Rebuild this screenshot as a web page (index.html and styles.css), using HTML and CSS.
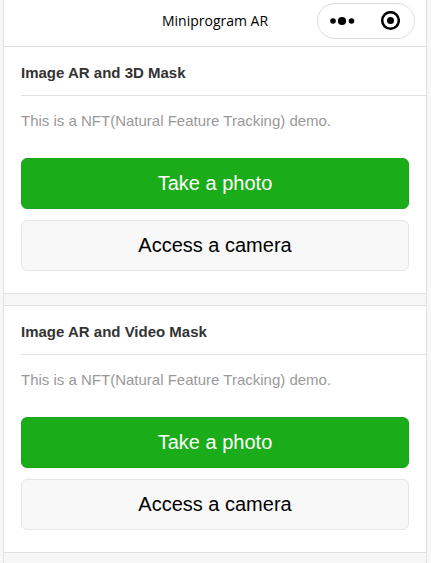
FILE: index.html
```html
<!DOCTYPE html>
<html lang="en">
<head>
<meta charset="utf-8">
<meta name="viewport" content="width=device-width, initial-scale=1">
<title>Miniprogram AR</title>
<link rel="stylesheet" href="styles.css">
</head>
<body>
<div class="phone">
  <header class="navbar">
    <h1 class="navbar-title">Miniprogram AR</h1>
    <div class="capsule">
      <button class="capsule-button" type="button" aria-label="More">
        <svg width="26" height="20" viewBox="0 0 26 20" aria-hidden="true">
          <circle cx="4" cy="10" r="2.8"/><circle cx="13" cy="10" r="4.1"/><circle cx="22.5" cy="10" r="2.8"/>
        </svg>
      </button>
      <button class="capsule-button" type="button" aria-label="Close">
        <svg width="20" height="20" viewBox="0 0 20 20" aria-hidden="true">
          <circle cx="10.5" cy="9.5" r="8.3" fill="none" stroke="#000" stroke-width="2.5"/><circle cx="10.5" cy="9.5" r="3.5"/>
        </svg>
      </button>
    </div>
  </header>
  <main class="cards">
    <section class="card">
      <h2 class="card-title">Image AR and 3D Mask</h2>
      <div class="card-body">
        <p class="card-text">This is a NFT(Natural Feature Tracking) demo.</p>
        <button class="button button-primary" type="button">Take a photo</button>
        <button class="button" type="button">Access a camera</button>
      </div>
    </section>
    <section class="card">
      <h2 class="card-title">Image AR and Video Mask</h2>
      <div class="card-body">
        <p class="card-text">This is a NFT(Natural Feature Tracking) demo.</p>
        <button class="button button-primary" type="button">Take a photo</button>
        <button class="button" type="button">Access a camera</button>
      </div>
    </section>
  </main>
</div>
</body>
</html>
```
FILE: styles.css
```css
* {
  box-sizing: border-box;
}

body {
  margin: 0;
  background: #f7f7f7;
  font-family: "Liberation Sans", Arial, sans-serif;
}

.phone {
  min-height: 100vh;
  margin: 0 4px 0 3px;
  border: solid #e2e2e2;
  border-width: 0 1px;
}

.navbar {
  display: grid;
  grid-template-columns: 1fr auto 1fr;
  align-items: center;
  height: 47px;
  padding: 0 11px 4px;
  background: #fff;
  border-bottom: 1px solid #e0e0e0;
}

.navbar-title {
  grid-column: 2;
  margin: 0;
  font: 400 14px/20px "Open Sans", "Noto Sans", sans-serif;
  color: #000;
}

.capsule {
  display: flex;
  justify-self: end;
  width: 98px;
  height: 36px;
  border: 1px solid #dcdcdc;
  border-radius: 18px;
}

.capsule-button {
  display: flex;
  flex: 1;
  align-items: center;
  justify-content: center;
  padding: 0;
  border: 0;
  background: none;
}

.cards {
  display: grid;
  gap: 11px;
}

.card {
  padding-left: 17px;
  background: #fff;
  border-bottom: 1px solid #e0e0e0;
}

.card + .card {
  border-top: 1px solid #e0e0e0;
}

.card-title {
  margin: 0;
  padding: 18px 0 14px;
  border-bottom: 1px solid #e0e0e0;
  font-size: 15px;
  line-height: 16px;
  color: #333;
}

.card-body {
  display: grid;
  gap: 11px;
  padding: 16px 17px 22px 0;
}

.card-text {
  margin: 0 0 17px;
  font-size: 15px;
  line-height: 18px;
  color: #999;
}

.button {
  height: 51px;
  padding: 0 0 2px;
  border: 1px solid #e6e6e8;
  border-radius: 6px;
  background: #f8f8f8;
  font: 400 20px/24px "Liberation Sans", Arial, sans-serif;
  color: #000;
}

.button-primary {
  border-color: #1aa51b;
  background: #1aad19;
  color: #fff;
}
```
